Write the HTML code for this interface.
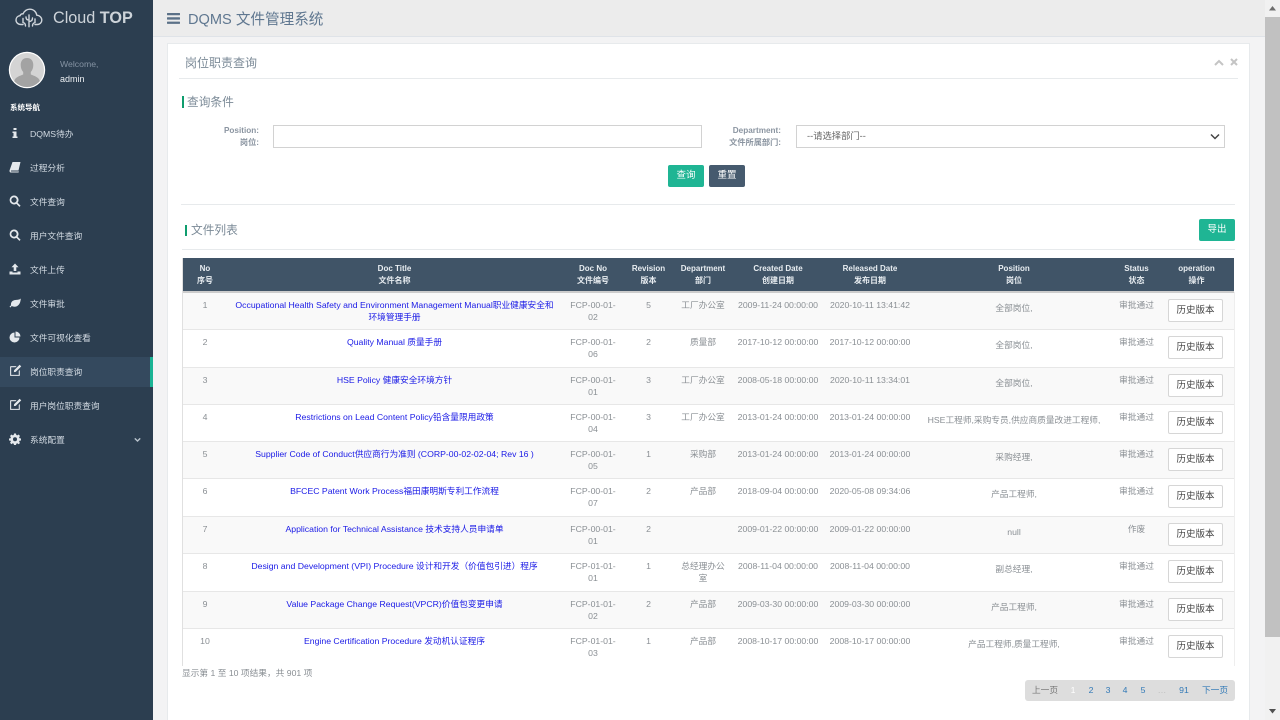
<!DOCTYPE html>
<html lang="zh-CN">
<head>
<meta charset="utf-8">
<title>DQMS 文件管理系统</title>
<style>
*{box-sizing:border-box}
html,body{margin:0;padding:0;width:1280px;height:720px;overflow:hidden;background:#f3f3f4;font-family:"Liberation Sans","Noto Sans CJK SC",sans-serif;font-size:8.7px;color:#676a6c}
.a{position:absolute}
#side{left:0;top:0;width:153px;height:720px;background:#2c3e50}
.nav{position:absolute;left:0;width:153px;height:30px;line-height:30px;color:#d3dbe3;padding-left:30px;font-size:8.7px}
.nav svg{position:absolute;left:9px;top:8px;width:12px;height:12px;fill:#e4e8ec}
.nav svg.e{width:13px;height:13px;top:7px}
.nav.on{background:#34495e;border-right:3px solid #1ab394}
#top{left:153px;top:0;width:1112px;height:37px;background:#ececec;border-bottom:1px solid #dfe3e8}
#panel{left:167px;top:43px;width:1083px;height:677px;background:#fff;border:1px solid #e7eaec;border-bottom:0}
.hr{position:absolute;height:1px;background:#e7eaec}
.bar{position:absolute;width:2px;background:#0f9d6e}
.h{position:absolute;font-size:11.7px;line-height:14px;color:#7b8a97;white-space:nowrap}
.lab{position:absolute;text-align:right;font-weight:bold;color:#8b95a1;font-size:8.2px;line-height:12px;white-space:nowrap}
.inp{position:absolute;top:125px;height:23px;width:429px;background:#fff;border:1px solid #d2d2d2}
.btn{position:absolute;width:36px;height:22px;line-height:22px;text-align:center;color:#fff;border-radius:2px;font-size:9.5px;background:#1fb594}
table{position:absolute;left:183px;top:258px;width:1051px;border-collapse:collapse;table-layout:fixed}
th{background:#405467;color:#e8edf1;font-weight:bold;font-size:8px;line-height:11.5px;height:34px;padding:5px 0 0;text-align:center;vertical-align:top;border-bottom:2px solid #ccc}
td{padding:6px 0 0;line-height:12px;text-align:center;vertical-align:top;font-size:8.7px;color:#8a8f94;border-bottom:1px solid #e7e7e7;overflow:hidden}
tr.o td{background:#f9f9f9}
td.t{color:#1a1ae6;padding-left:5px;padding-right:5px}
td.p{padding-top:9px}
td.s{font-size:8.7px}
.hb{display:block;width:55px;height:23px;line-height:21px;margin:0 0 0 6px;background:#fff;border:1px solid #d6d6d6;border-radius:2px;color:#444;font-size:9.5px;text-align:center}
.pg{position:absolute;top:680px;line-height:21px;font-size:8.7px;color:#337ab7;transform:translateX(-50%);white-space:nowrap}
</style>
</head>
<body>
<div class="a" id="side">
  <svg class="a" style="left:15px;top:8px" width="28" height="20" viewBox="0 0 28 20" fill="none" stroke="#cfd5db" stroke-width="1.4" stroke-linecap="round"><path d="M8 16.5H6C3 16.5 1 14.500 1 12c0-2.300 1.700-4 4-4.300.5-1.200 1.700-2 3-1.800C9.500 2.800 12 1.200 14.800 1.200c3.700 0 6.500 2.600 7 6 2.800.2 5 2.200 5 4.900 0 2.500-2 4.400-4.500 4.400H20"/><path d="M14 18.800V7M14 12c-2 0-3-1-3-3M14 13.500c2.200 0 3.500-1 3.500-3.500M10.500 18c0-2-.5-3-2.500-3.500V10.500M17.500 18c0-2 .8-3 2.500-3.500V11"/></svg>
  <div class="a" style="left:53px;top:9px;font-size:16.200px;line-height:18px;color:#cdd3d9;white-space:nowrap">Cloud <b>TOP</b></div>
  <svg class="a" style="left:8px;top:51px" width="38" height="38" viewBox="0 0 38 38"><defs><clipPath id="c"><circle cx="19" cy="19" r="17"/></clipPath></defs><circle cx="19" cy="19" r="18.200" fill="#fff"/><g clip-path="url(#c)"><rect width="38" height="38" fill="#d4d4d4"/><path d="M19 7c4.200 0 6.300 3 6.300 7 0 3-1 5.300-2.500 7v2.500c3.500 1.500 8 2.500 9 6.500v8H6.200v-8c1-4 5.500-5 9-6.500V21c-1.500-1.700-2.500-4-2.500-7 0-4 2.100-7 6.300-7z" fill="#a3a3a3"/></g></svg>
  <div class="a" style="left:60px;top:58px;line-height:12px;color:#8593a3">Welcome,</div>
  <div class="a" style="left:60px;top:73px;line-height:12px;color:#eef1f4;font-size:9px">admin</div>
  <div class="a" style="left:10px;top:102px;line-height:11px;font-size:7.500px;font-weight:bold;color:#fff">系统导航</div>

  <div class="nav" style="top:119px"><svg viewBox="0 0 12 12"><path d="M4.500 1h3v2h-3zM3.500 4.500h4V9.500h1V11h-5V9.500h1V6h-1z"/></svg>DQMS待办</div>
  <div class="nav" style="top:153px"><svg viewBox="0 0 12 12"><path d="M3.500 1H11.500L9.500 9.500H2.500C1.800 9.500 1.600 10.500 2.500 10.500H10L9.500 11.500H2C.8 11.500.3 10.300.6 9.200z"/></svg>过程分析</div>
  <div class="nav" style="top:187px"><svg viewBox="0 0 12 12"><path fill-rule="evenodd" d="M5 .5a4.500 4.500 0 0 1 3.600 7.200l3 3-1.200 1.200-3-3A4.500 4.500 0 1 1 5 .5zm0 1.800a2.700 2.700 0 1 0 0 5.400 2.700 2.700 0 0 0 0-5.400z"/></svg>文件查询</div>
  <div class="nav" style="top:221px"><svg viewBox="0 0 12 12"><path fill-rule="evenodd" d="M5 .5a4.500 4.500 0 0 1 3.600 7.200l3 3-1.200 1.200-3-3A4.500 4.500 0 1 1 5 .5zm0 1.800a2.700 2.700 0 1 0 0 5.400 2.700 2.700 0 0 0 0-5.400z"/></svg>用户文件查询</div>
  <div class="nav" style="top:255px"><svg viewBox="0 0 12 12"><path d="M6 .5 9.500 4.200H7.300V8H4.700V4.200H2.500zM.5 8.500h3v1h5v-1h3V11.500H.5z"/></svg>文件上传</div>
  <div class="nav" style="top:289px"><svg viewBox="0 0 12 12"><path d="M11.800 1.500C11.500 7 9 9.700 5.500 9.700c-1.200 0-2-.3-2.700-.8L1.500 10.500.5 9.800 2 8.200C1.500 5 3.700 3.300 6.500 3 8.500 2.800 10.500 2.800 11.800 1.500z"/></svg>文件审批</div>
  <div class="nav" style="top:323px"><svg viewBox="0 0 12 12"><path d="M6.500.5a5 5 0 0 1 5 5h-5zM5.500 1.500v5h5A5 5 0 1 1 5.500 1.500z"/></svg>文件可视化查看</div>
  <div class="nav on" style="top:357px"><svg class="e" viewBox="0 0 12 12"><path d="M1.500 2H7L6 3H2v7h7V6.500l1-1V11H1V2.500zM9.800.7 11.300 2.200 6.200 7.300 4.500 7.500 4.700 5.800z"/></svg>岗位职责查询</div>
  <div class="nav" style="top:391px"><svg class="e" viewBox="0 0 12 12"><path d="M1.500 2H7L6 3H2v7h7V6.500l1-1V11H1V2.500zM9.800.7 11.300 2.200 6.200 7.300 4.500 7.500 4.700 5.800z"/></svg>用户岗位职责查询</div>
  <div class="nav" style="top:425px"><svg viewBox="0 0 12 12"><path fill-rule="evenodd" d="M5 .5h2l.3 1.500 1 .4L9.600 1.500 11 3l-.9 1.300.4 1 1.500.2v2l-1.500.3-.4 1 .9 1.200L9.600 11.200l-1.300-.9-1 .4L7 12H5l-.3-1.300-1-.4-1.200.9L1 9.800l.9-1.200-.4-1L0 7.500v-2l1.500-.2.400-1L1 3l1.500-1.500 1.200.9 1-.4zM6 4.300a2 2 0 1 0 0 4 2 2 0 0 0 0-4z"/></svg>系统配置<svg style="left:134px;top:11px;width:7px;height:7px" viewBox="0 0 9 9"><path d="M1 3l3.500 3.500L8 3" fill="none" stroke="#b8c2cc" stroke-width="1.800"/></svg></div>
</div>

<div class="a" id="top">
  <svg class="a" style="left:14px;top:13px" width="13" height="11" viewBox="0 0 13 11" fill="#5b7188"><rect width="13" height="2.300" rx=".5"/><rect y="4.300" width="13" height="2.300" rx=".5"/><rect y="8.600" width="13" height="2.300" rx=".5"/></svg>
  <div class="a" style="left:35px;top:11px;font-size:14.600px;line-height:19px;color:#5f7790;white-space:nowrap">DQMS 文件管理系统</div>
</div>

<div class="a" id="panel"></div>
<div class="h" style="left:185px;top:56px;font-size:12px">岗位职责查询</div>
<svg class="a" style="left:1214px;top:59px" width="10" height="8" viewBox="0 0 10 8"><path d="M1 6l4-4 4 4" fill="none" stroke="#c4c4c4" stroke-width="2"/></svg>
<svg class="a" style="left:1230px;top:58px" width="8" height="8" viewBox="0 0 8 8"><path d="M1 1l6 6M7 1l-6 6" fill="none" stroke="#c4c4c4" stroke-width="2"/></svg>
<div class="hr" style="left:179px;top:78px;width:1059px"></div>

<div class="bar" style="left:182px;top:96px;height:12px"></div>
<div class="h" style="left:187px;top:96px">查询条件</div>
<div class="lab" style="right:1021px;top:125px">Position:</div>
<div class="lab" style="right:1021px;top:137px">岗位:</div>
<div class="inp" style="left:273px"></div>
<div class="lab" style="right:499px;top:125px">Department:</div>
<div class="lab" style="right:499px;top:137px">文件所属部门:</div>
<div class="inp" style="left:796px;padding-left:10px;line-height:21px;color:#666;font-size:9.3px">--请选择部门--</div>
<svg class="a" style="left:1210px;top:133px" width="10" height="8" viewBox="0 0 10 8"><path d="M1 1.500l4 4 4-4" fill="none" stroke="#444" stroke-width="1.500"/></svg>
<div class="btn" style="left:668px;top:165px">查询</div>
<div class="btn" style="left:709px;top:165px;background:#465a6e">重置</div>
<div class="hr" style="left:181px;top:204px;width:1054px"></div>

<div class="bar" style="left:185px;top:225px;height:11px"></div>
<div class="h" style="left:191px;top:224px">文件列表</div>
<div class="btn" style="left:1199px;top:219px">导出</div>
<div class="hr" style="left:182px;top:249px;width:1053px"></div>

<div class="a" style="left:182px;top:258px;width:1px;height:408px;background:#e0e0e0"></div>
<div class="a" style="left:1234px;top:292px;width:1px;height:374px;background:#eee"></div>
<table>
<colgroup><col style="width:44px"><col style="width:335px"><col style="width:62px"><col style="width:49px"><col style="width:60px"><col style="width:90px"><col style="width:94px"><col style="width:194px"><col style="width:51px"><col style="width:72px"></colgroup>
<tr><th>No<br>序号</th><th>Doc Title<br>文件名称</th><th>Doc No<br>文件编号</th><th>Revision<br>版本</th><th>Department<br>部门</th><th>Created Date<br>创建日期</th><th>Released Date<br>发布日期</th><th>Position<br>岗位</th><th>Status<br>状态</th><th style="padding-right:3px">operation<br>操作</th></tr>
<tr class="o" style="height:37px"><td>1</td><td class="t">Occupational Health Safety and Environment Management Manual职业健康安全和环境管理手册</td><td>FCP-00-01-<br>02</td><td>5</td><td>工厂办公室</td><td>2009-11-24 00:00:00</td><td>2020-10-11 13:41:42</td><td class="p">全部岗位,</td><td class="s">审批通过</td><td><span class="hb">历史版本</span></td></tr>
<tr style="height:38px"><td>2</td><td class="t">Quality Manual 质量手册</td><td>FCP-00-01-<br>06</td><td>2</td><td>质量部</td><td>2017-10-12 00:00:00</td><td>2017-10-12 00:00:00</td><td class="p">全部岗位,</td><td class="s">审批通过</td><td><span class="hb">历史版本</span></td></tr>
<tr class="o" style="height:37px"><td>3</td><td class="t">HSE Policy 健康安全环境方针</td><td>FCP-00-01-<br>01</td><td>3</td><td>工厂办公室</td><td>2008-05-18 00:00:00</td><td>2020-10-11 13:34:01</td><td class="p">全部岗位,</td><td class="s">审批通过</td><td><span class="hb">历史版本</span></td></tr>
<tr style="height:37px"><td>4</td><td class="t">Restrictions on Lead Content Policy铅含量限用政策</td><td>FCP-00-01-<br>04</td><td>3</td><td>工厂办公室</td><td>2013-01-24 00:00:00</td><td>2013-01-24 00:00:00</td><td class="p">HSE工程师,采购专员,供应商质量改进工程师,</td><td class="s">审批通过</td><td><span class="hb">历史版本</span></td></tr>
<tr class="o" style="height:37px"><td>5</td><td class="t">Supplier Code of Conduct供应商行为准则 (CORP-00-02-02-04; Rev 16 )</td><td>FCP-00-01-<br>05</td><td>1</td><td>采购部</td><td>2013-01-24 00:00:00</td><td>2013-01-24 00:00:00</td><td class="p">采购经理,</td><td class="s">审批通过</td><td><span class="hb">历史版本</span></td></tr>
<tr style="height:38px"><td>6</td><td class="t">BFCEC Patent Work Process福田康明斯专利工作流程</td><td>FCP-00-01-<br>07</td><td>2</td><td>产品部</td><td>2018-09-04 00:00:00</td><td>2020-05-08 09:34:06</td><td class="p">产品工程师,</td><td class="s">审批通过</td><td><span class="hb">历史版本</span></td></tr>
<tr class="o" style="height:37px"><td>7</td><td class="t">Application for Technical Assistance 技术支持人员申请单</td><td>FCP-00-01-<br>01</td><td>2</td><td></td><td>2009-01-22 00:00:00</td><td>2009-01-22 00:00:00</td><td class="p">null</td><td class="s">作废</td><td><span class="hb">历史版本</span></td></tr>
<tr style="height:38px"><td>8</td><td class="t">Design and Development (VPI) Procedure 设计和开发（价值包引进）程序</td><td>FCP-01-01-<br>01</td><td>1</td><td>总经理办公<br>室</td><td>2008-11-04 00:00:00</td><td>2008-11-04 00:00:00</td><td class="p">副总经理,</td><td class="s">审批通过</td><td><span class="hb">历史版本</span></td></tr>
<tr class="o" style="height:37px"><td>9</td><td class="t">Value Package Change Request(VPCR)价值包变更申请</td><td>FCP-01-01-<br>02</td><td>2</td><td>产品部</td><td>2009-03-30 00:00:00</td><td>2009-03-30 00:00:00</td><td class="p">产品工程师,</td><td class="s">审批通过</td><td><span class="hb">历史版本</span></td></tr>
<tr style="height:37px"><td style="border:0">10</td><td class="t" style="border:0">Engine Certification Procedure 发动机认证程序</td><td style="border:0">FCP-01-01-<br>03</td><td style="border:0">1</td><td style="border:0">产品部</td><td style="border:0">2008-10-17 00:00:00</td><td style="border:0">2008-10-17 00:00:00</td><td class="p" style="border:0">产品工程师,质量工程师,</td><td class="s" style="border:0">审批通过</td><td style="border:0"><span class="hb">历史版本</span></td></tr>
</table>

<div class="a" style="left:182px;top:667px;line-height:12px;color:#8a8f94;white-space:nowrap">显示第 1 至 10 项结果，共 901 项</div>
<div class="a" style="left:1025px;top:680px;width:210px;height:21px;background:#ddd;border-radius:3px"></div>
<span class="pg" style="left:1045px;color:#777">上一页</span>
<span class="pg" style="left:1073px;color:#fff">1</span>
<span class="pg" style="left:1091px">2</span>
<span class="pg" style="left:1108px">3</span>
<span class="pg" style="left:1125px">4</span>
<span class="pg" style="left:1143px">5</span>
<span class="pg" style="left:1162px;color:#bbb">…</span>
<span class="pg" style="left:1184px">91</span>
<span class="pg" style="left:1215px">下一页</span>

<div class="a" style="left:1265px;top:0;width:15px;height:720px;background:#f1f1f1"></div>
<div class="a" style="left:1265px;top:17px;width:15px;height:620px;background:#c1c1c1"></div>
<svg class="a" style="left:1265px;top:0" width="15" height="17" viewBox="0 0 15 17"><path d="M4 10.500h7L7.500 6z" fill="#6e6e6e"/></svg>
<svg class="a" style="left:1265px;top:703px" width="15" height="17" viewBox="0 0 15 17"><path d="M4 6h7L7.500 10.500z" fill="#505050"/></svg>
</body>
</html>
